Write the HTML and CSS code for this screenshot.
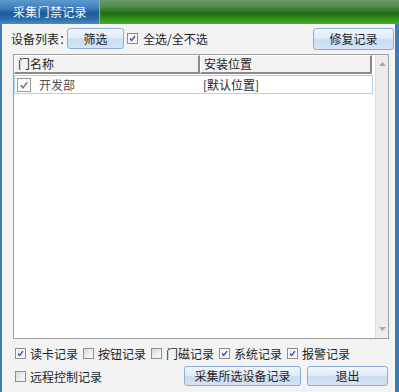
FILE: index.html
```html
<!DOCTYPE html>
<html>
<head>
<meta charset="utf-8">
<link rel="stylesheet" href="styles.css">
</head>
<body>
<div class="window">
  <div class="titlebar">
    <div class="tab">采集门禁记录</div>
    <div class="greenbar"></div>
  </div>
  <div class="content">
    <div class="toprow">
      <span class="label">设备列表：</span>
      <button class="btn btn-filter">筛选</button>
      <span class="chk chk-on"><svg viewBox="0 0 11 11"><path d="M2.5 5.5 L4.5 8 L8.5 2.5" fill="none" stroke="#2a3fbf" stroke-width="1.6"/></svg></span>
      <span class="chklabel">全选/全不选</span>
      <span class="spacer"></span>
      <button class="btn btn-repair">修复记录</button>
    </div>
    <div class="list">
      <div class="listmain">
        <div class="header">
          <div class="hcell col1">门名称</div>
          <div class="hcell col2">安装位置</div>
        </div>
        <div class="row">
          <div class="cell col1">
            <span class="rowchk"><svg viewBox="0 0 13 13"><path d="M3 6.5 L5.5 9.5 L10 3.5" fill="none" stroke="#7a7a7a" stroke-width="1.5"/></svg></span>
            <span class="rowtext">开发部</span>
          </div>
          <div class="cell col2">[默认位置]</div>
        </div>
      </div>
      <div class="scrollbar">
        <svg class="arrow" viewBox="0 0 7 4"><path d="M0 4 L3.5 0 L7 4 Z" fill="#a9a9a9"/></svg>
        <span class="spacer"></span>
        <svg class="arrow" viewBox="0 0 7 4"><path d="M0 0 L3.5 4 L7 0 Z" fill="#a9a9a9"/></svg>
      </div>
    </div>
    <div class="optrow">
      <span class="chk chk-on"><svg viewBox="0 0 11 11"><path d="M2.5 5.5 L4.5 8 L8.5 2.5" fill="none" stroke="#2a3fbf" stroke-width="1.6"/></svg></span>
      <span class="optlabel">读卡记录</span>
      <span class="chk"></span>
      <span class="optlabel">按钮记录</span>
      <span class="chk"></span>
      <span class="optlabel">门磁记录</span>
      <span class="chk chk-on"><svg viewBox="0 0 11 11"><path d="M2.5 5.5 L4.5 8 L8.5 2.5" fill="none" stroke="#2a3fbf" stroke-width="1.6"/></svg></span>
      <span class="optlabel">系统记录</span>
      <span class="chk chk-on"><svg viewBox="0 0 11 11"><path d="M2.5 5.5 L4.5 8 L8.5 2.5" fill="none" stroke="#2a3fbf" stroke-width="1.6"/></svg></span>
      <span class="optlabel">报警记录</span>
    </div>
    <div class="bottomrow">
      <span class="chk"></span>
      <span class="optlabel">远程控制记录</span>
      <span class="spacer"></span>
      <button class="btn btn-collect">采集所选设备记录</button>
      <button class="btn btn-exit">退出</button>
    </div>
  </div>
</div>
</body>
</html>
```

FILE: styles.css
```css
* { box-sizing: border-box; }
html, body { margin: 0; padding: 0; }
body {
  width: 399px;
  height: 392px;
  overflow: hidden;
  font-family: "Noto Sans CJK SC", "DejaVu Sans", sans-serif;
  font-size: 12px;
  color: #1e1e1e;
}
.window {
  width: 399px;
  height: 392px;
  display: flex;
  flex-direction: column;
}
.titlebar {
  height: 24px;
  display: flex;
  flex: none;
}
.tab {
  width: 100px;
  background: linear-gradient(to bottom, #5d9ad0 0%, #3b7cba 35%, #1d5a9a 55%, #2a6ead 80%, #4a8cc7 100%);
  color: #f4f8fc;
  font-size: 12px;
  line-height: 24px;
  padding-left: 13px;
  letter-spacing: 0.3px;
  border-right: 1px solid #7ab0dc;
  white-space: nowrap;
}
.greenbar {
  flex: 1;
  background: linear-gradient(to bottom, #6a9a6a 0%, #4d8a48 30%, #1d6e10 55%, #2e8a18 75%, #4cae2a 100%);
}
.content {
  flex: 1;
  background: #f3f3f3;
  border-left: 2px solid #3e7cb8;
  border-right: 4px solid #3e7cb8;
  display: flex;
  flex-direction: column;
  padding: 4px 0 0 11px;
}
.toprow {
  display: flex;
  align-items: center;
  height: 21px;
}
.label { width: 55px; flex: none; white-space: nowrap; line-height: 21px; margin-left: -2px; }
.btn {
  font-family: "Noto Sans CJK SC", "DejaVu Sans", sans-serif;
  font-size: 12px;
  color: #1e1e1e;
  border: 1px solid #8aaed6;
  border-radius: 3px;
  background: linear-gradient(to bottom, #f0f6fc 0%, #e0ecf8 45%, #c9dcf1 55%, #d4e4f5 100%);
  padding: 0;
  height: 21px;
  line-height: 19px;
  flex: none;
  white-space: nowrap;
}
.btn-filter { width: 57px; margin-left: 1px; }
.btn-repair { width: 81px; height: 22px; margin-right: 1px; }
.chk {
  width: 11px;
  height: 11px;
  border: 1px solid #8f8f8f;
  background: linear-gradient(135deg, #d8d8d8 0%, #f0f0f0 60%, #fafafa 100%);
  display: inline-flex;
  flex: none;
}
.chk-on { background: #f6f6f6; }
.chk svg { width: 9px; height: 9px; }
.toprow .chk { margin-left: 3px; }
.chklabel { margin-left: 5px; white-space: nowrap; }
.spacer { flex: 1; }
.list {
  margin-top: 5px;
  width: 376px;
  height: 285px;
  border: 1px solid #a0a0a0;
  background: #fff;
  display: flex;
}
.listmain { flex: 1; display: flex; flex-direction: column; }
.header { display: flex; height: 19px; }
.hcell {
  background: #f2f2f2;
  border-right: 2px solid #8a8a8a;
  border-bottom: 2px solid #8a8a8a;
  border-top: 1px solid #fff;
  border-left: 1px solid #fff;
  line-height: 16px;
  padding-left: 3px;
  white-space: nowrap;
}
.col1 { width: 186px; }
.col2 { width: 172px; }
.row {
  display: flex;
  height: 19px;
  margin-top: 1px;
  margin-right: 2px;
  border: 1px solid #a8d8f4;
}
.cell { display: flex; align-items: center; white-space: nowrap; }
.row .col1 { width: 185px; padding-left: 2px; }
.row .col2 { padding-left: 3px; }
.rowchk {
  width: 14px;
  height: 14px;
  border: 1px solid #9a9a9a;
  background: #fbfbfb;
  display: inline-flex;
  align-items: center;
  justify-content: center;
}
.rowchk svg { width: 12px; height: 12px; }
.rowtext { margin-left: 8px; color: #505050; }
.scrollbar {
  width: 17px;
  background: #ececec;
  border-left: 1px solid #e0e0e0;
  display: flex;
  flex-direction: column;
  align-items: center;
  padding: 7px 0 7px;
}
.arrow { width: 7px; height: 4px; }
.optrow {
  display: flex;
  align-items: center;
  margin-top: 7px;
  height: 14px;
  padding-left: 2px;
}
.optlabel { white-space: nowrap; }
.optrow .optlabel { margin-left: 4px; margin-right: 5px; }
.bottomrow {
  display: flex;
  align-items: center;
  margin-top: 6px;
  height: 20px;
  padding-left: 2px;
}
.bottomrow .optlabel { margin-left: 4px; }
.btn-collect { width: 117px; height: 20px; line-height: 18px; }
.btn-exit { width: 81px; height: 20px; line-height: 18px; margin-left: 6px; margin-right: 7px; }
```
